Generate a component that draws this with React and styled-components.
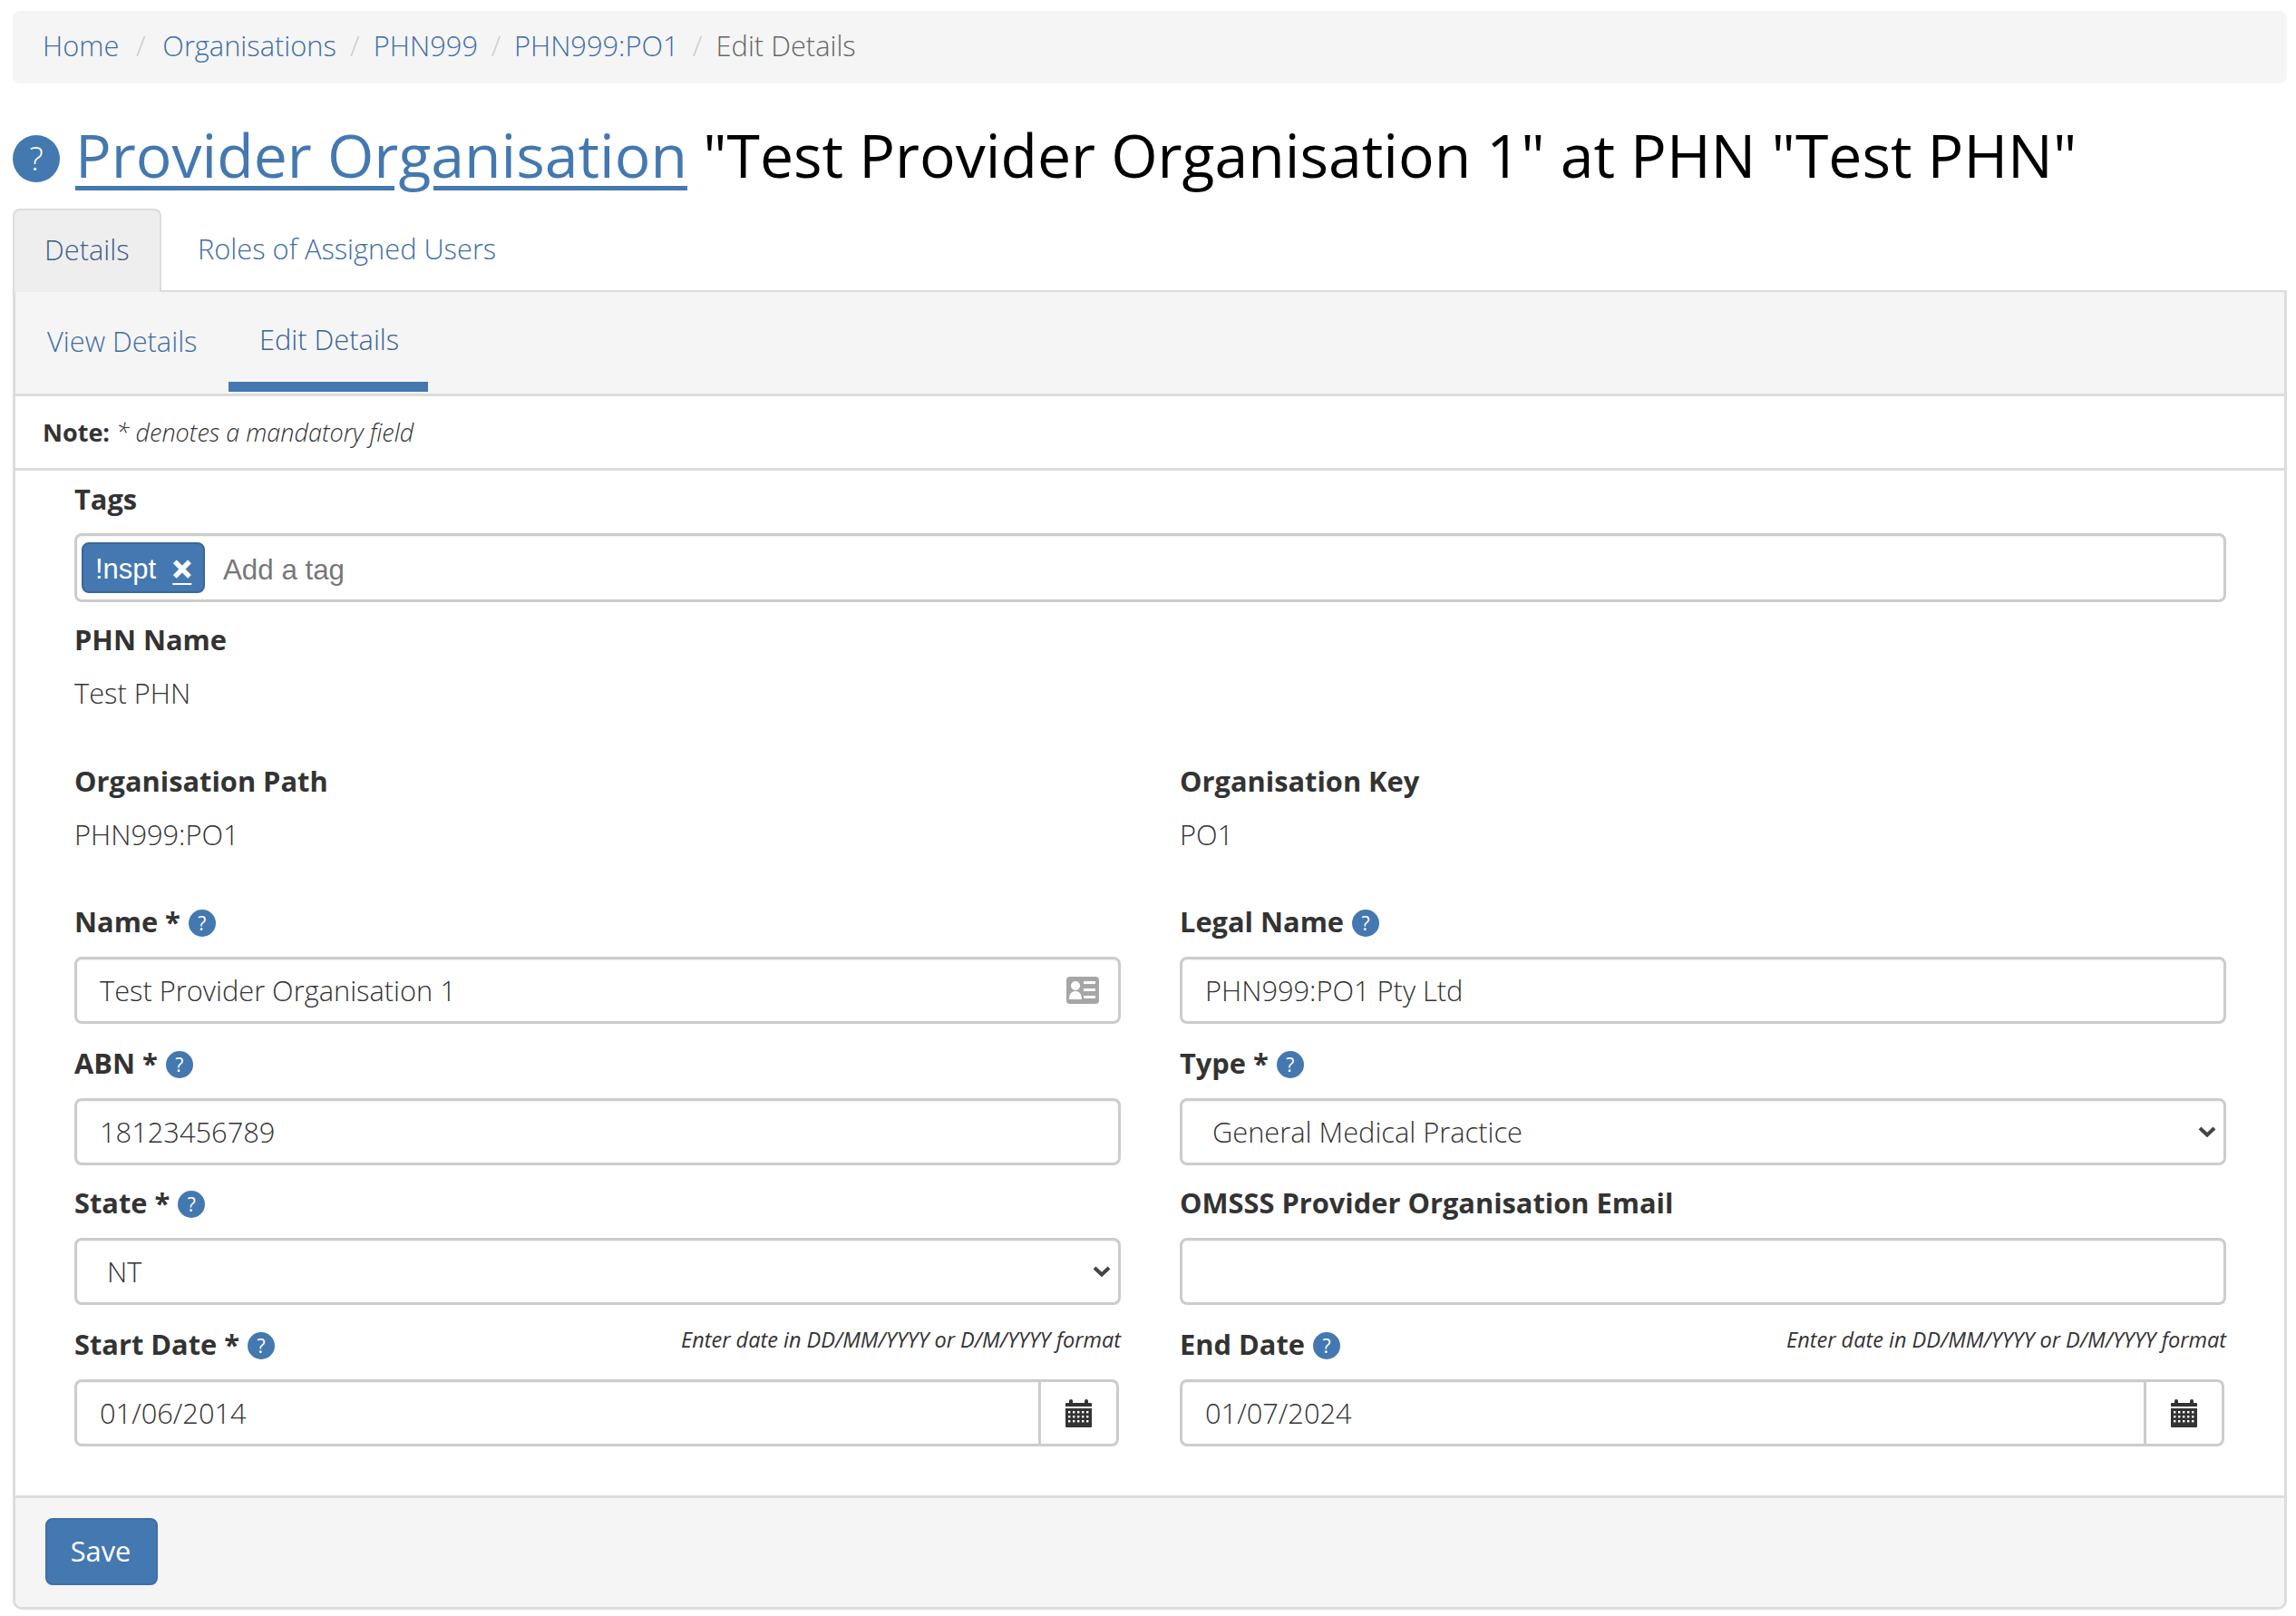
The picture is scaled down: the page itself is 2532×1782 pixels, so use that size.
import React from "react";
import styled, { createGlobalStyle } from "styled-components";

const Global = createGlobalStyle`
  html, body { margin: 0; padding: 0; background: #fff; }
  body { font-family: "Open Sans", "Liberation Sans", sans-serif; font-size: 30.8px; font-weight: 300; color: #333; line-height: 1.4; }
  * { box-sizing: border-box; }
`;

const BLUE = "#4478b0";
const LINK = "#3f6ea3";

const Page = styled.div`
  width: 2532px;
  padding: 12px 10px 0 14px;
`;
const Breadcrumb = styled.nav`
  height: 80px;
  background: #f5f5f5;
  border-radius: 8px;
  display: flex;
  align-items: center;
  padding: 0 0 3px 33px;
`;
const Crumb = styled.a`
  color: ${LINK};
`;
const CrumbCurrent = styled.span`
  color: #666;
`;
const Sep = styled.span`
  color: #ccc;
  width: ${(p) => p.$w}px;
  text-align: center;
`;
const Title = styled.h1`
  margin: 0;
  height: 138px;
  padding-top: 34px;
  padding-bottom: 16px;
  display: flex;
  align-items: center;
  font-size: 66.1px;
  font-weight: 400;
  line-height: 92px;
  color: #000;
  white-space: pre;
`;
const BigHelp = styled.span`
  width: 52px;
  height: 52px;
  margin-top: 10px;
  margin-right: 17px;
  border-radius: 50%;
  background: ${BLUE};
  color: #fff;
  font-size: 36px;
  font-weight: 300;
  line-height: 52px;
  text-align: center;
  flex: none;
`;
const TitleLink = styled.a`
  color: ${BLUE};
  text-decoration: underline;
  text-decoration-thickness: 5px;
  text-underline-offset: 9px;
`;
const Tabs = styled.div`
  display: flex;
  height: 92px;
  border-bottom: 2px solid #ddd;
`;
const Tab = styled.div`
  width: ${(p) => p.$w}px;
  height: 92px;
  padding-left: ${(p) => p.$pad}px;
  padding-bottom: 2px;
  display: flex;
  align-items: center;
  color: ${(p) => (p.$active ? "#3f5f85" : LINK)};
  background: ${(p) => (p.$active ? "#eeeeee" : "transparent")};
  border: ${(p) => (p.$active ? "2px solid #ddd" : "none")};
  border-bottom: none;
  border-radius: 8px 8px 0 0;
`;
const Panel = styled.section`
  border: 3px solid #ddd;
  border-top: none;
  border-radius: 0 0 10px 10px;
`;
const SubNav = styled.div`
  height: 115px;
  background: #f5f5f5;
  border-bottom: 3px solid #ddd;
  display: flex;
`;
const SubTab = styled.div`
  width: ${(p) => p.$w}px;
  padding-left: ${(p) => p.$pad}px;
  color: ${(p) => (p.$active ? "#3a6496" : LINK)};
  border-bottom: ${(p) => (p.$active ? `11px solid ${BLUE}` : "none")};
  height: 110px;
  padding-top: ${(p) => (p.$active ? "31px" : "33px")};
`;
const Note = styled.div`
  height: 82px;
  border-bottom: 3px solid #ddd;
  padding-left: 30px;
  display: flex;
  align-items: center;
  gap: 7px;
  font-size: 27px;
`;
const NoteBold = styled.strong`
  font-weight: 700;
`;
const NoteText = styled.em`
  font-style: italic;
`;
const Body = styled.div`
  padding: 13px 64px 56px 65px;
`;
const Label = styled.label`
  display: flex;
  align-items: center;
  gap: 9px;
  height: 36px;
  font-weight: 700;
  font-size: 30.8px;
  line-height: 36px;
  color: #333;
  white-space: pre;
`;
const TagBox = styled.div`
  margin-top: 20px;
  height: 76px;
  border: 3px solid #ccc;
  border-radius: 8px;
  display: flex;
  align-items: center;
  padding-left: 5px;
  box-shadow: inset 0 1px 2px rgba(0, 0, 0, 0.06);
`;
const Chip = styled.span`
  width: 136px;
  height: 56px;
  background: ${BLUE};
  border: 2px solid #3b6795;
  border-radius: 8px;
  color: #fff;
  font-family: "Liberation Sans", Arial, sans-serif;
  font-weight: 400;
  font-size: 31px;
  display: flex;
  align-items: center;
  padding: 3px 0 0 13px;
  gap: 18px;
`;
const ChipX = styled.span`
  font-weight: 700;
  font-size: 36px;
  line-height: 30px;
  text-decoration: underline;
  text-decoration-thickness: 2px;
  text-underline-offset: 3px;
  -webkit-text-stroke: 1.2px #fff;
`;
const Placeholder = styled.span`
  margin: 5px 0 0 20px;
  font-family: "Liberation Sans", Arial, sans-serif;
  font-weight: 400;
  font-size: 31.3px;
  color: #777;
`;
const Static = styled.div`
  height: 44px;
  line-height: 44px;
  margin-top: 19px;
`;
const Grid = styled.div`
  display: grid;
  grid-template-columns: 1154px 1154px;
  column-gap: 65px;
`;
const Field = styled.div`
  height: ${(p) => p.$h}px;
  margin-top: ${(p) => p.$mt || 0}px;
`;
const LabelRow = styled.div`
  height: 38px;
  display: flex;
  align-items: center;
  justify-content: space-between;
`;
const HelpDot = styled.span`
  width: 30px;
  height: 30px;
  border-radius: 50%;
  background: ${BLUE};
  color: #fff;
  font-size: 21px;
  font-weight: 400;
  line-height: 30px;
  text-align: center;
  margin-top: 4px;
  flex: none;
`;
const Hint = styled.span`
  font-size: 23.5px;
  font-style: italic;
  font-weight: 400;
  margin-top: -10px;
`;
const InputWrap = styled.div`
  position: relative;
  margin-top: 20px;
`;
const Input = styled.input`
  display: block;
  width: 100%;
  height: 74px;
  border: 3px solid #ccc;
  border-radius: 8px;
  padding: 0 25px;
  font: 300 30.8px "Open Sans", sans-serif;
  color: #333;
  background: #fff;
  outline: none;
  box-shadow: inset 0 1px 2px rgba(0, 0, 0, 0.06);
`;
const Select = styled.select`
  display: block;
  width: 100%;
  height: 74px;
  border: 3px solid #ccc;
  border-radius: 8px;
  padding: 0 33px;
  font: 300 30.8px "Open Sans", sans-serif;
  color: #333;
  background: #fff;
  appearance: none;
  outline: none;
  box-shadow: inset 0 1px 2px rgba(0, 0, 0, 0.06);
`;
const OverIcon = styled.span`
  position: absolute;
  right: ${(p) => p.$r}px;
  top: 50%;
  transform: translateY(-50%);
  display: flex;
  pointer-events: none;
`;
const DateGroup = styled.div`
  display: flex;
  width: 1152px;
  height: 74px;
  margin-top: 20px;
`;
const DateInput = styled.input`
  flex: 1;
  min-width: 0;
  height: 74px;
  border: 3px solid #ccc;
  border-radius: 8px 0 0 8px;
  padding: 0 25px;
  font: 300 30.8px "Open Sans", sans-serif;
  color: #333;
  outline: none;
  box-shadow: inset 0 1px 2px rgba(0, 0, 0, 0.06);
`;
const Addon = styled.span`
  width: 86px;
  height: 74px;
  border: 3px solid #ccc;
  border-left: none;
  border-radius: 0 8px 8px 0;
  display: flex;
  align-items: center;
  justify-content: center;
`;
const Footer = styled.div`
  height: 123px;
  background: #f5f5f5;
  border-top: 3px solid #ddd;
  border-radius: 0 0 8px 8px;
  padding: 22px 0 0 33px;
`;
const SaveButton = styled.button`
  width: 124px;
  height: 74px;
  background: ${BLUE};
  border: 2px solid #3f6fa4;
  border-radius: 8px;
  color: #fff;
  font: 400 30.8px "Open Sans", sans-serif;
  padding: 0 2px 2px 0;
`;

const CardIcon = () => (
  <svg width="36" height="30" viewBox="0 0 36 30">
    <rect width="36" height="30" rx="4" fill="#a6a6a6" />
    <circle cx="10" cy="10" r="5" fill="#fff" />
    <path d="M3 25c0-6 3-9 7-9s7 3 7 9z" fill="#fff" />
    <path d="M19 5h13v3H19zM19 13h13v3H19zM19 21h13v3H19z" fill="#fff" />
  </svg>
);
const Calendar = () => (
  <svg width="29" height="31" viewBox="0 0 29 31">
    <path d="M0 8V5q0-1 1-1h3V2a2 2 0 0 1 4 0v2h13V2a2 2 0 0 1 4 0v2h3q1 0 1 1v3z" fill="#333" />
    <path d="M0 10h29v20q0 1-1 1H1q-1 0-1-1z" fill="#333" />
    {[13, 18, 23].map((y) =>
      [3, 8, 13, 18, 23].map((x) => <rect key={`${x}-${y}`} x={x} y={y} width="2.4" height="2.4" fill="#fff" />)
    )}
  </svg>
);
const Chevron = () => (
  <svg width="20" height="13" viewBox="0 0 20 13">
    <path d="M2 2.5l8 7.5 8-7.5" fill="none" stroke="#444" strokeWidth="4" />
  </svg>
);

const HintText = "Enter date in DD/MM/YYYY or D/M/YYYY format";

export default function App() {
  return (
    <Page>
      <Global />
      <Breadcrumb>
        <Crumb>Home</Crumb>
        <Sep $w={48}>/</Sep>
        <Crumb>Organisations</Crumb>
        <Sep $w={41}>/</Sep>
        <Crumb>PHN999</Crumb>
        <Sep $w={40}>/</Sep>
        <Crumb>PHN999:PO1</Crumb>
        <Sep $w={41}>/</Sep>
        <CrumbCurrent>Edit Details</CrumbCurrent>
      </Breadcrumb>
      <Title>
        <BigHelp>?</BigHelp>
        <TitleLink>Provider Organisation</TitleLink> "Test Provider Organisation 1" at PHN "Test PHN"
      </Title>
      <Tabs>
        <Tab $w={164} $pad={33} $active>Details</Tab>
        <Tab $w={400} $pad={40}>Roles of Assigned Users</Tab>
      </Tabs>
      <Panel>
        <SubNav>
          <SubTab $w={235} $pad={35}>View Details</SubTab>
          <SubTab $w={220} $pad={34} $active>Edit Details</SubTab>
        </SubNav>
        <Note>
          <NoteBold>Note:</NoteBold>
          <NoteText>* denotes a mandatory field</NoteText>
        </Note>
        <Body>
          <Label>Tags</Label>
          <TagBox>
            <Chip>!nspt<ChipX>×</ChipX></Chip>
            <Placeholder>Add a tag</Placeholder>
          </TagBox>
          <Field $h={136} $mt={23}>
            <Label>PHN Name</Label>
            <Static>Test PHN</Static>
          </Field>
          <Grid>
            <Field $h={135} $mt={20}>
              <Label>Organisation Path</Label>
              <Static>PHN999:PO1</Static>
            </Field>
            <Field $h={135} $mt={20}>
              <Label>Organisation Key</Label>
              <Static>PO1</Static>
            </Field>
            <Field $h={156} $mt={19}>
              <LabelRow><Label>Name *<HelpDot>?</HelpDot></Label></LabelRow>
              <InputWrap>
                <Input readOnly value="Test Provider Organisation 1" />
                <OverIcon $r={24}><CardIcon /></OverIcon>
              </InputWrap>
            </Field>
            <Field $h={156} $mt={19}>
              <LabelRow><Label>Legal Name<HelpDot>?</HelpDot></Label></LabelRow>
              <InputWrap><Input readOnly value="PHN999:PO1 Pty Ltd" /></InputWrap>
            </Field>
            <Field $h={154}>
              <LabelRow><Label>ABN *<HelpDot>?</HelpDot></Label></LabelRow>
              <InputWrap><Input readOnly value="18123456789" /></InputWrap>
            </Field>
            <Field $h={154}>
              <LabelRow><Label>Type *<HelpDot>?</HelpDot></Label></LabelRow>
              <InputWrap>
                <Select defaultValue="g"><option value="g">General Medical Practice</option></Select>
                <OverIcon $r={11}><Chevron /></OverIcon>
              </InputWrap>
            </Field>
            <Field $h={156}>
              <LabelRow><Label>State *<HelpDot>?</HelpDot></Label></LabelRow>
              <InputWrap>
                <Select defaultValue="nt"><option value="nt">NT</option></Select>
                <OverIcon $r={11}><Chevron /></OverIcon>
              </InputWrap>
            </Field>
            <Field $h={156}>
              <LabelRow><Label>OMSSS Provider Organisation Email</Label></LabelRow>
              <InputWrap><Input readOnly value="" /></InputWrap>
            </Field>
            <Field $h={130}>
              <LabelRow><Label>Start Date *<HelpDot>?</HelpDot></Label><Hint>{HintText}</Hint></LabelRow>
              <DateGroup>
                <DateInput readOnly value="01/06/2014" />
                <Addon><Calendar /></Addon>
              </DateGroup>
            </Field>
            <Field $h={130}>
              <LabelRow><Label>End Date<HelpDot>?</HelpDot></Label><Hint>{HintText}</Hint></LabelRow>
              <DateGroup>
                <DateInput readOnly value="01/07/2024" />
                <Addon><Calendar /></Addon>
              </DateGroup>
            </Field>
          </Grid>
        </Body>
        <Footer><SaveButton>Save</SaveButton></Footer>
      </Panel>
    </Page>
  );
}
